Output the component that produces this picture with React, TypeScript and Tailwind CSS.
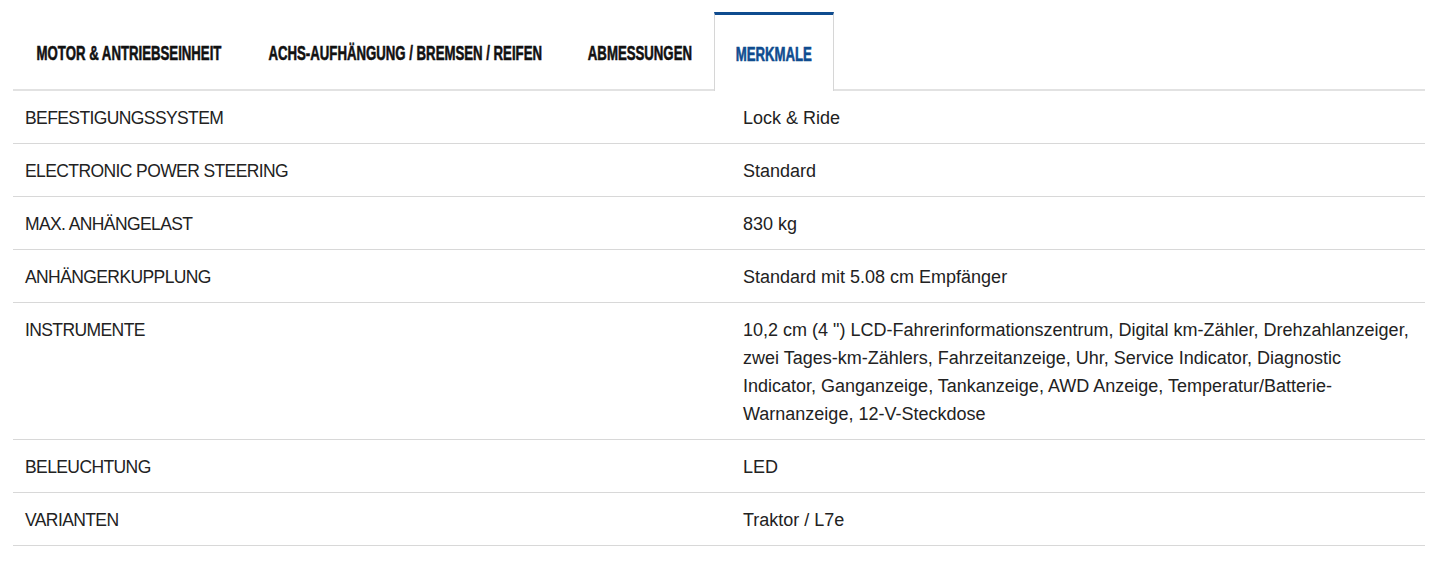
import * as React from 'react';

const tabs = [
  { label: 'MOTOR & ANTRIEBSEINHEIT', width: 'w-[232px]' },
  { label: 'ACHS-AUFHÄNGUNG / BREMSEN / REIFEN', width: 'w-[321px]' },
  { label: 'ABMESSUNGEN', width: 'w-[148px]' },
  { label: 'MERKMALE', width: 'w-[120px]' },
];

const rows: { label: string; value: string[] }[] = [
  { label: 'BEFESTIGUNGSSYSTEM', value: ['Lock & Ride'] },
  { label: 'ELECTRONIC POWER STEERING', value: ['Standard'] },
  { label: 'MAX. ANHÄNGELAST', value: ['830 kg'] },
  { label: 'ANHÄNGERKUPPLUNG', value: ['Standard mit 5.08 cm Empfänger'] },
  {
    label: 'INSTRUMENTE',
    value: [
      '10,2 cm (4 ") LCD-Fahrerinformationszentrum, Digital km-Zähler, Drehzahlanzeiger,',
      'zwei Tages-km-Zählers, Fahrzeitanzeige, Uhr, Service Indicator, Diagnostic',
      'Indicator, Ganganzeige, Tankanzeige, AWD Anzeige, Temperatur/Batterie-',
      'Warnanzeige, 12-V-Steckdose',
    ],
  },
  { label: 'BELEUCHTUNG', value: ['LED'] },
  { label: 'VARIANTEN', value: ['Traktor / L7e'] },
];

export default function App() {
  const active = 3;
  return (
    <div className="min-h-[572px] bg-white px-[13px] pt-[12px] text-[#222] [font-family:'Liberation_Sans',Arial,sans-serif]">
      <div className="w-[1412px]">
        {/* tabs */}
        <nav className="flex border-b-2 border-[#e2e2e2]">
          {tabs.map((tab, i) => (
            <div
              key={tab.label}
              className={
                i === active
                  ? `relative -mb-[2px] flex h-[79px] ${tab.width} items-center justify-center border-x border-t-[3px] border-x-[#d6d6d6] border-t-[#0f4c8f] bg-white pt-[1px] text-[#0f4c8f]`
                  : `flex h-[77px] ${tab.width} items-center justify-center pt-[4px] text-[#111]`
              }
            >
              <span className="inline-block scale-x-[0.66] whitespace-nowrap text-[20px] font-bold leading-5 [-webkit-text-stroke:0.6px_currentColor]">
                {tab.label}
              </span>
            </div>
          ))}
        </nav>

        {/* spec rows */}
        <div>
          {rows.map((row) => (
            <div key={row.label} className="grid grid-cols-[718px_1fr] border-b border-[#d8d8d8] pt-[13px] pb-[11px] text-[18px] leading-[28px]">
              <div className="pl-3 text-[17.5px] tracking-[-0.6px]">{row.label}</div>
              <div className="pl-3">
                {row.value.map((line) => (
                  <div key={line} className="whitespace-nowrap">{line}</div>
                ))}
              </div>
            </div>
          ))}
        </div>
      </div>
    </div>
  );
}
